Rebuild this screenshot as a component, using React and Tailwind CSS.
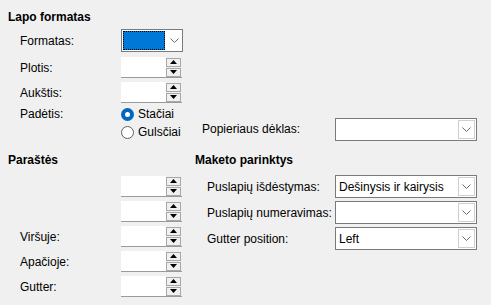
import React from "react";

const Chevron = () => (
  <svg width="9" height="5" viewBox="0 0 9 5" className="block">
    <path d="M0.5 0.5 L4.5 4.5 L8.5 0.5" fill="none" stroke="#6b6b6b" strokeWidth="1" />
  </svg>
);

// Windows style combo box
const Combo = ({ value, className = "" }) => (
  <div className={`flex h-[23px] w-[142px] border border-[#7a7a7a] bg-white ${className}`}>
    <div className="flex flex-1 items-center pl-[3px] text-[12px] leading-none text-black">{value}</div>
    <div className="m-[1px] flex w-[17px] items-center justify-center border border-[#d0d0d0] bg-white">
      <Chevron />
    </div>
  </div>
);

const SpinArrow = ({ up }) => (
  <div className="flex h-[9px] w-[15px] items-center justify-center border border-[#a8a8a8] bg-[#f0f0f0]">
    <svg width="7" height="4" viewBox="0 0 7 4" className="block">
      {up ? <path d="M0 4 L3.5 0 L7 4 Z" fill="#000" /> : <path d="M0 0 L3.5 4 L7 0 Z" fill="#000" />}
    </svg>
  </div>
);

const Spin = () => (
  <div className="flex h-[21px] w-[61px] border-b border-[#9a9a9a] bg-white">
    <div className="flex-1" />
    <div className="flex flex-col justify-center gap-[1px] bg-[#f0f0f0] pr-[1px]">
      <SpinArrow up />
      <SpinArrow />
    </div>
  </div>
);

const Radio = ({ checked, label }) => (
  <div className="flex h-[18px] items-center gap-[4px]">
    {checked ? (
      <div className="flex h-[13px] w-[13px] items-center justify-center rounded-full bg-[#0067c0]">
        <div className="h-[5px] w-[5px] rounded-full bg-white" />
      </div>
    ) : (
      <div className="h-[13px] w-[13px] rounded-full border border-[#5f5f5f] bg-white" />
    )}
    <span>{label}</span>
  </div>
);

const Label = ({ children, className = "" }) => (
  <div className={`text-[12px] leading-none text-black ${className}`}>{children}</div>
);

export default function App() {
  return (
    <div
      className="h-[305px] w-[491px] overflow-hidden bg-[#f0f0f0] text-[12px] leading-[16px] text-black"
      style={{ fontFamily: '"Liberation Sans", Arial, sans-serif' }}
    >
      {/* Lapo formatas */}
      <div className="pl-[8px] pt-[9px] font-bold">Lapo formatas</div>

      <div className="mt-[4px] flex items-center pl-[20px]">
        <Label className="w-[101px]">Formatas:</Label>
        <div className="flex h-[23px] w-[62px] border border-[#7a7a7a] bg-white">
          <div className="m-[1px] flex-1 border border-dotted border-black bg-[#0078d7]" />
          <div className="flex w-[16px] items-center justify-center bg-white">
            <Chevron />
          </div>
        </div>
      </div>

      <div className="mt-[5px] flex items-center pl-[20px]">
        <Label className="w-[101px]">Plotis:</Label>
        <Spin />
      </div>

      <div className="mt-[4px] flex items-center pl-[20px]">
        <Label className="w-[101px]">Aukštis:</Label>
        <Spin />
      </div>

      <div className="mt-[2px] flex pl-[20px]">
        <div className="flex h-[18px] w-[101px] items-center">Padėtis:</div>
        <div className="w-[81px]">
          <Radio checked label="Stačiai" />
          <Radio label="Gulsčiai" />
        </div>
        <div className="mt-[12px] flex items-center">
          <Label className="w-[133px]">Popieriaus dėklas:</Label>
          <Combo value="" />
        </div>
      </div>

      {/* Paraštės + Maketo parinktys */}
      <div className="mt-[11px] flex">
        <div className="w-[195px] pl-[8px]">
          <div className="font-bold">Paraštės</div>
          <div className="mt-[8px] flex flex-col gap-[4px]">
            {["", "", "Viršuje:", "Apačioje:", "Gutter:"].map((l, i) => (
              <div key={i} className="flex items-center pl-[12px]">
                <Label className="w-[101px]">{l}</Label>
                <Spin />
              </div>
            ))}
          </div>
        </div>
        <div>
          <div className="font-bold">Maketo parinktys</div>
          <div className="mt-[7px] flex flex-col gap-[3px]">
            {[
              ["Puslapių išdėstymas:", "Dešinysis ir kairysis"],
              ["Puslapių numeravimas:", ""],
              ["Gutter position:", "Left"],
            ].map(([l, v]) => (
              <div key={l} className="flex items-center pl-[12px]">
                <Label className="w-[128px]">{l}</Label>
                <Combo value={v} />
              </div>
            ))}
          </div>
        </div>
      </div>
    </div>
  );
}
